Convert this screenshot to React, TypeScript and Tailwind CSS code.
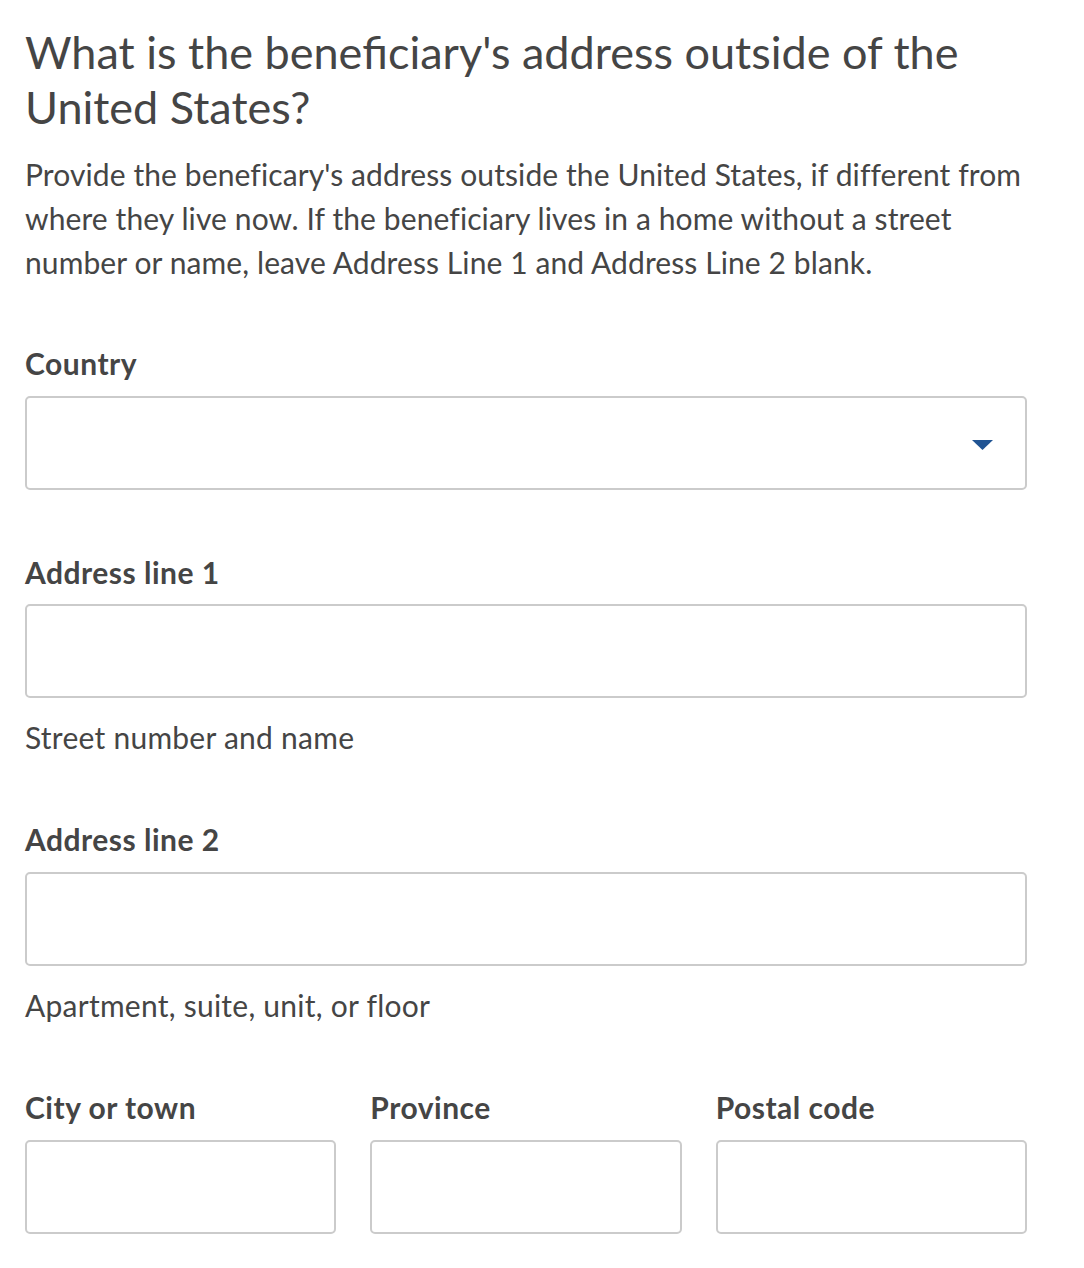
import React from 'react';

const font = { fontFamily: 'Lato, "Open Sans", sans-serif' };

function Label({ children }: { children: React.ReactNode }) {
  return (
    <label className="block text-[30px] leading-[44px] font-bold tracking-[0.5px] text-[#454545]">{children}</label>
  );
}

function Box({ select = false }: { select?: boolean }) {
  return (
    <div className="relative h-[94px] w-full rounded-[5px] border-2 border-[#cbcbcb] bg-white">
      {select && (
        <svg className="absolute right-[32px] top-[42px]" width="21" height="10" viewBox="0 0 21 10">
          <polygon points="0,0 21,0 10.5,10" fill="#205493" />
        </svg>
      )}
    </div>
  );
}

function Hint({ children }: { children: React.ReactNode }) {
  return <p className="mt-[17px] text-[30px] leading-[44px] tracking-[0.25px] text-[#454545]">{children}</p>;
}

export default function App() {
  return (
    <div className="min-h-[1268px] w-[1084px] bg-white pl-[25px] pr-[57px] pt-[25px]" style={font}>
      <h1 className="text-[45px] leading-[55px] font-normal text-[#454545]">
        What is the beneficiary's address outside of the United States?
      </h1>
      <p className="-mr-[30px] mt-[17px] text-[30px] leading-[44px] tracking-[0.1px] text-[#454545]">
        Provide the beneficary's address outside the United States, if different from where they live now. If the
        beneficiary lives in a home without a street number or name, leave Address Line 1 and Address Line 2 blank.
      </p>

      <div className="mt-[57px]">
        <Label>Country</Label>
        <div className="mt-[11px]">
          <Box select />
        </div>
      </div>

      <div className="mt-[60px]">
        <Label>Address line 1</Label>
        <div className="mt-[10px]">
          <Box />
        </div>
        <Hint>Street number and name</Hint>
      </div>

      <div className="mt-[58px]">
        <Label>Address line 2</Label>
        <div className="mt-[11px]">
          <Box />
        </div>
        <Hint>Apartment, suite, unit, or floor</Hint>
      </div>

      <div className="mt-[58px] grid grid-cols-3 gap-x-[34px]">
        {['City or town', 'Province', 'Postal code'].map((l) => (
          <div key={l}>
            <Label>{l}</Label>
            <div className="mt-[11px]">
              <Box />
            </div>
          </div>
        ))}
      </div>
    </div>
  );
}
